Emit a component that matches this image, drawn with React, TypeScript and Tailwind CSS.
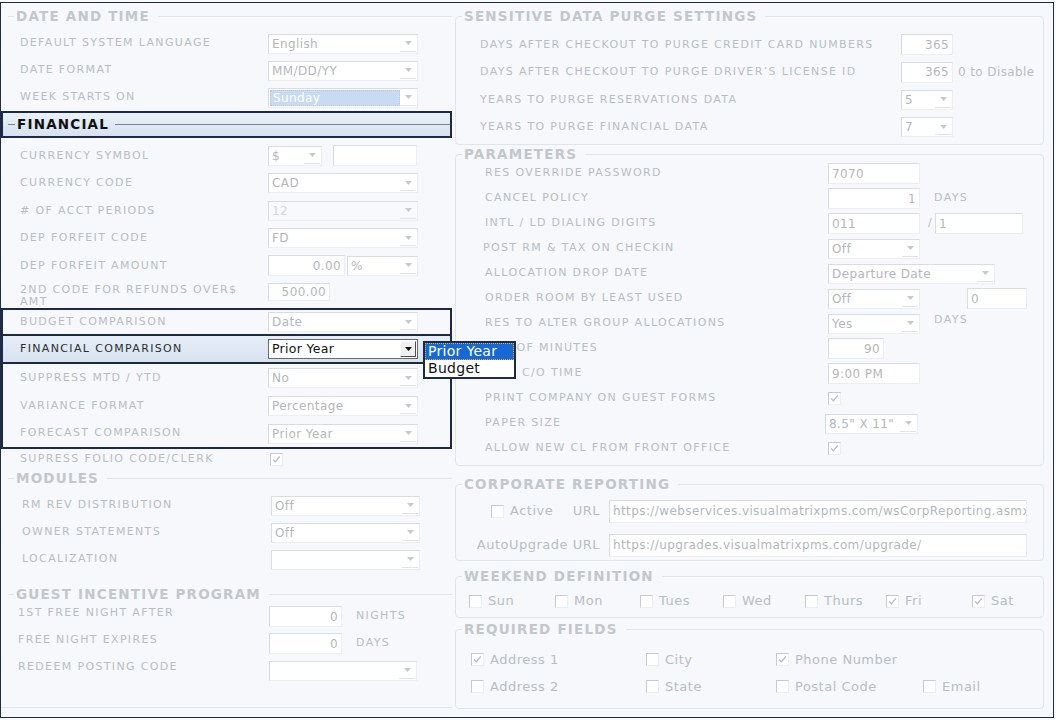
import type { ReactNode } from 'react'

const LABEL = 'whitespace-nowrap text-[11px] uppercase tracking-[1.35px] text-[#b9bdc3]'
const LEGEND = 'text-[13.5px] font-bold leading-[14px] tracking-[1.2px] text-[#c3c7cc]'
const VALUE = 'text-[12px] tracking-[0.4px]'
const SMALL = 'text-[13px] tracking-[0.5px] text-[#b9bdc3]'

function Arrow({ dark = false }: { dark?: boolean }) {
  return (
    <svg width="7" height="4" viewBox="0 0 7 4" aria-hidden>
      <path d="M0 0h7L3.5 4z" fill={dark ? '#111111' : '#c6cacf'} />
    </svg>
  )
}

type SelectProps = { value?: string; w: string; tone?: 'faded' | 'dim' | 'active' | 'focus' }

function Select({ value = '', w, tone = 'faded' }: SelectProps) {
  if (tone === 'active') {
    return (
      <div className={`flex h-[20px] shrink-0 items-center border border-[#6a6a6a] bg-white ${w}`}>
        <span className="flex-1 truncate pl-[3px] text-[12.5px] tracking-[0.3px] text-[#111]">{value}</span>
        <span className="mr-px flex h-[16px] w-[16px] items-center justify-center border border-t-white border-l-white border-r-[#4f4f4f] border-b-[#4f4f4f] bg-[#f0f0f0]">
          <Arrow dark />
        </span>
      </div>
    )
  }
  const dim = tone === 'dim'
  return (
    <div
      className={`flex h-[20px] shrink-0 items-center border border-t-[#d9dce0] border-l-[#d9dce0] border-r-[#eceef1] border-b-[#eceef1] ${
        dim ? 'bg-[#f8f9fb]' : 'bg-white'
      } ${w}`}
    >
      {tone === 'focus' ? (
        <span className="ml-px flex h-[16px] flex-1 items-center border border-dotted border-[#b7c7dc] bg-[#c8dbf2] pl-[2px] text-[12px] tracking-[0.4px] text-white">
          {value}
        </span>
      ) : (
        <span className={`flex-1 truncate pl-[3px] ${VALUE} ${dim ? 'text-[#d3d6da]' : 'text-[#b3b7bd]'}`}>{value}</span>
      )}
      <span className="mr-px flex h-[16px] w-[16px] items-center justify-center border-b border-[#e1e4e7]">
        <Arrow />
      </span>
    </div>
  )
}

function Field({ value = '', w, right = false, h = 'h-[21px]' }: { value?: string; w: string; right?: boolean; h?: string }) {
  return (
    <div
      className={`flex shrink-0 items-center overflow-hidden border border-t-[#d9dce0] border-l-[#d9dce0] border-r-[#eceef1] border-b-[#eceef1] bg-white px-[3px] ${VALUE} text-[#b3b7bd] ${
        right ? 'justify-end' : ''
      } ${w} ${h}`}
    >
      <span className="whitespace-nowrap">{value}</span>
    </div>
  )
}

function Check({ on = false }: { on?: boolean }) {
  return (
    <span className="flex h-[13px] w-[13px] shrink-0 items-center justify-center border border-t-[#c7cbd0] border-l-[#c7cbd0] border-r-[#eceef0] border-b-[#eceef0] bg-white">
      {on && (
        <svg width="9" height="9" viewBox="0 0 9 9" aria-hidden>
          <path d="M1.2 4.3 3.3 6.8 7.8 1.4" fill="none" stroke="#b5b9bf" strokeWidth="1.3" />
        </svg>
      )}
    </span>
  )
}

function Row({ label, lab, h = 'h-[27px]', children }: { label: ReactNode; lab: string; h?: string; children?: ReactNode }) {
  return (
    <div className={`flex items-center ${h}`}>
      <div className={`shrink-0 ${LABEL} ${lab}`}>{label}</div>
      {children}
    </div>
  )
}

function Section({ title, className, children }: { title: string; className: string; children: ReactNode }) {
  return (
    <fieldset className={`border-[#e1e5ea] ${className}`}>
      <legend className={`ml-[6px] pl-[2px] pr-[8px] ${LEGEND}`}>{title}</legend>
      {children}
    </fieldset>
  )
}

function LeftColumn() {
  const L1 = 'pl-[12px] w-[260px]'
  const LF = 'pl-[19px] w-[267px]'
  const LB = 'pl-[17px] w-[265px]'
  const LM = 'pl-[14px] w-[263px]'
  const LG = 'pl-[10px] w-[261px]'
  return (
    <div className="flex h-[704px] w-[451px] shrink-0 flex-col border-b border-[#e2e5e9]">
      <Section title="DATE AND TIME" className="ml-[7px] mt-[5px] border-t">
        <div className="pt-[7px]">
          <Row label="DEFAULT SYSTEM LANGUAGE" lab={L1}>
            <Select value="English" w="w-[150px]" />
          </Row>
          <Row label="DATE FORMAT" lab={L1}>
            <Select value="MM/DD/YY" w="w-[150px]" />
          </Row>
          <Row label="WEEK STARTS ON" lab={L1}>
            <Select value="Sunday" w="w-[150px]" tone="focus" />
          </Row>
        </div>
      </Section>

      <div className="flex h-[27px] items-center border-2 border-[#1c2a45] bg-linear-to-b from-[#eaf1f8] to-[#d6e2ee]">
        <span className="ml-[5px] h-px w-[7px] bg-[#7b838e]" />
        <span className="ml-[2px] text-[13.5px] font-bold tracking-[1.2px] text-[#111]">FINANCIAL</span>
        <span className="ml-[6px] h-px flex-1 bg-[#7b838e]" />
      </div>

      <div className="pt-[4px]">
        <Row label="CURRENCY SYMBOL" lab={LF} h="h-[27.5px]">
          <Select value="$" w="w-[54px]" />
          <div className="ml-[11px]">
            <Field w="w-[84px]" />
          </div>
        </Row>
        <Row label="CURRENCY CODE" lab={LF} h="h-[27.5px]">
          <Select value="CAD" w="w-[150px]" />
        </Row>
        <Row label="# OF ACCT PERIODS" lab={LF} h="h-[27.5px]">
          <Select value="12" w="w-[150px]" tone="dim" />
        </Row>
        <Row label="DEP FORFEIT CODE" lab={LF} h="h-[27.5px]">
          <Select value="FD" w="w-[150px]" />
        </Row>
        <Row label="DEP FORFEIT AMOUNT" lab={LF} h="h-[27.5px]">
          <Field value="0.00" w="w-[77px]" right />
          <div className="ml-[2px]">
            <Select value="%" w="w-[71px]" />
          </div>
        </Row>
        <div className="flex h-[28.5px] items-start">
          <div className={`shrink-0 pt-[4px] leading-[12px] ${LABEL} ${LF}`}>
            2ND CODE FOR REFUNDS OVER$
            <br />
            AMT
          </div>
          <div className="mt-[3.5px]">
            <Field value="500.00" w="w-[62px]" right h="h-[18px]" />
          </div>
        </div>
      </div>

      <div className="border-2 border-[#1c2a45]">
        <Row label="BUDGET COMPARISON" lab={LB} h="h-[24px]">
          <Select value="Date" w="w-[150px]" />
        </Row>
        <div className="-mx-[2px] flex h-[30px] items-center border-2 border-[#1c2a45] bg-linear-to-b from-[#e6eef7] to-[#d8e3ef]">
          <div className={`shrink-0 whitespace-nowrap text-[11px] tracking-[1.35px] text-[#2e2e2e] ${LB}`}>FINANCIAL COMPARISON</div>
          <div className="relative">
            <Select value="Prior Year" w="w-[150px]" tone="active" />
            <div className="absolute left-[155px] top-[2px] z-10 w-[93px] border-2 border-[#1c2a45] bg-white">
              <div className="h-[17px] border border-dotted border-[#e7a35a] bg-[#1669d4] pl-[2px] text-[14px] leading-[15px] tracking-[0.3px] text-white">
                Prior Year
              </div>
              <div className="h-[17px] pl-[3px] text-[14px] leading-[16px] tracking-[0.3px] text-[#111]">Budget</div>
            </div>
          </div>
        </div>
        <Row label="SUPPRESS MTD / YTD" lab={LB} h="h-[28px]">
          <Select value="No" w="w-[150px]" />
        </Row>
        <Row label="VARIANCE FORMAT" lab={LB} h="h-[28px]">
          <Select value="Percentage" w="w-[150px]" />
        </Row>
        <Row label="FORECAST COMPARISON" lab={LB} h="h-[27px]">
          <Select value="Prior Year" w="w-[150px]" />
        </Row>
      </div>

      <Row label="SUPRESS FOLIO CODE/CLERK" lab={LF} h="h-[20px]">
        <div className="ml-[2px]">
          <Check on />
        </div>
      </Row>

      <Section title="MODULES" className="ml-[7px] mt-[2px] border-t">
        <div className="pt-[7px]">
          <Row label="RM REV DISTRIBUTION" lab={LM}>
            <Select value="Off" w="w-[149px]" />
          </Row>
          <Row label="OWNER STATEMENTS" lab={LM}>
            <Select value="Off" w="w-[149px]" />
          </Row>
          <Row label="LOCALIZATION" lab={LM}>
            <Select w="w-[149px]" />
          </Row>
        </div>
      </Section>

      <Section title="GUEST INCENTIVE PROGRAM" className="ml-[7px] mt-[14px] border-t">
        <div className="pt-[2px]">
          <Row label={<span className="relative -top-[3px]">1ST FREE NIGHT AFTER</span>} lab={LG}>
            <Field value="0" w="w-[73px]" right />
            <span className={`ml-[14px] ${LABEL}`}>NIGHTS</span>
          </Row>
          <Row label={<span className="relative -top-[3px]">FREE NIGHT EXPIRES</span>} lab={LG}>
            <Field value="0" w="w-[73px]" right />
            <span className={`ml-[14px] ${LABEL}`}>DAYS</span>
          </Row>
          <Row label={<span className="relative -top-[3px]">REDEEM POSTING CODE</span>} lab={LG}>
            <Select w="w-[148px]" />
          </Row>
        </div>
      </Section>
    </div>
  )
}

function RightColumn() {
  const LS = 'pl-[24px] w-[445px]'
  const LP = 'pl-[29px] w-[372px]'
  const box = 'ml-[3px] w-[589px] rounded-[4px] border'
  return (
    <div className="flex w-[601px] flex-col">
      <Section title="SENSITIVE DATA PURGE SETTINGS" className={`${box} mt-[5px] pb-[3px]`}>
        <div className="pt-[8px]">
          <Row label="DAYS AFTER CHECKOUT TO PURGE CREDIT CARD NUMBERS" lab={LS} h="h-[27.5px]">
            <Field value="365" w="w-[52px]" right />
          </Row>
          <Row label="DAYS AFTER CHECKOUT TO PURGE DRIVER’S LICENSE ID" lab={LS} h="h-[27.5px]">
            <Field value="365" w="w-[52px]" right />
            <span className={`ml-[5px] ${VALUE} text-[#b9bdc3]`}>0 to Disable</span>
          </Row>
          <Row label="YEARS TO PURGE RESERVATIONS DATA" lab={LS} h="h-[27.5px]">
            <Select value="5" w="w-[52px]" />
          </Row>
          <Row label="YEARS TO PURGE FINANCIAL DATA" lab={LS} h="h-[27.5px]">
            <Select value="7" w="w-[52px]" />
          </Row>
        </div>
      </Section>

      <Section title="PARAMETERS" className={`${box} mt-[2px] pb-[4px]`}>
        <Row label="RES OVERRIDE PASSWORD" lab={LP} h="h-[25px]">
          <Field value="7070" w="w-[92px]" />
        </Row>
        <Row label="CANCEL POLICY" lab={LP} h="h-[25px]">
          <Field value="1" w="w-[92px]" right />
          <span className={`ml-[14px] ${LABEL}`}>DAYS</span>
        </Row>
        <Row label="INTL / LD DIALING DIGITS" lab={LP} h="h-[25px]">
          <Field value="011" w="w-[92px]" />
          <span className={`ml-[8px] ${LABEL}`}>/</span>
          <div className="ml-[2px]">
            <Field value="1" w="w-[88px]" />
          </div>
        </Row>
        <Row label="POST RM & TAX ON CHECKIN" lab="pl-[27px] w-[372px]" h="h-[25px]">
          <Select value="Off" w="w-[92px]" />
        </Row>
        <Row label="ALLOCATION DROP DATE" lab={LP} h="h-[25px]">
          <Select value="Departure Date" w="w-[167px]" />
        </Row>
        <Row label="ORDER ROOM BY LEAST USED" lab={LP} h="h-[25px]">
          <Select value="Off" w="w-[92px]" />
          <div className="ml-[47px]">
            <Field value="0" w="w-[60px]" />
          </div>
        </Row>
        <Row label="RES TO ALTER GROUP ALLOCATIONS" lab={LP} h="h-[25px]">
          <Select value="Yes" w="w-[92px]" />
          <span className={`relative -top-[3px] ml-[14px] ${LABEL}`}>DAYS</span>
        </Row>
        <Row label={<span className="pl-[16px]"># OF MINUTES</span>} lab={LP} h="h-[25px]">
          <Field value="90" w="w-[56px]" right />
        </Row>
        <Row label="LATE C/O TIME" lab={LP} h="h-[25px]">
          <Field value="9:00 PM" w="w-[92px]" />
        </Row>
        <Row label="PRINT COMPANY ON GUEST FORMS" lab={LP} h="h-[25px]">
          <Check on />
        </Row>
        <Row label="PAPER SIZE" lab="pl-[29px] w-[369px]" h="h-[25px]">
          <Select value={'8.5" X 11"'} w="w-[93px]" />
        </Row>
        <Row label="ALLOW NEW CL FROM FRONT OFFICE" lab={LP} h="h-[25px]">
          <Check on />
        </Row>
      </Section>

      <Section title="CORPORATE REPORTING" className={`${box} mt-[11px] pb-[3px]`}>
        <div className="pt-[8px]">
          <div className="flex h-[24px] items-center">
            <div className="flex w-[153px] shrink-0 items-center pl-[35px] pr-[9px]">
              <Check />
              <span className={`ml-[6px] ${SMALL}`}>Active</span>
              <span className={`ml-auto ${SMALL}`}>URL</span>
            </div>
            <Field value="https://webservices.visualmatrixpms.com/wsCorpReporting.asmx" w="w-[418px]" h="h-[23px]" />
          </div>
          <div className="mt-[10px] flex h-[24px] items-center">
            <div className="flex w-[153px] shrink-0 justify-end pr-[9px]">
              <span className={SMALL}>AutoUpgrade URL</span>
            </div>
            <Field value="https://upgrades.visualmatrixpms.com/upgrade/" w="w-[418px]" h="h-[23px]" />
          </div>
        </div>
      </Section>

      <Section title="WEEKEND DEFINITION" className={`${box} mt-[8px] pb-[5px]`}>
        <div className="box-content flex h-[22px] items-center pl-[13px] pt-[7px]">
          {[
            ['Sun', false, 'w-[86px]'],
            ['Mon', false, 'w-[85px]'],
            ['Tues', false, 'w-[83px]'],
            ['Wed', false, 'w-[82px]'],
            ['Thurs', false, 'w-[81px]'],
            ['Fri', true, 'w-[86px]'],
            ['Sat', true, 'w-[60px]'],
          ].map(([d, on, w]) => (
            <div key={d as string} className={`flex items-center gap-[6px] ${w}`}>
              <Check on={on as boolean} />
              <span className={SMALL}>{d as string}</span>
            </div>
          ))}
        </div>
      </Section>

      <Section title="REQUIRED FIELDS" className={`${box} mt-[4px] pb-[8px]`}>
        <div className="grid grid-cols-[175px_130px_147px_100px] pl-[15px] pt-[10px]">
          {[
            ['Address 1', true],
            ['City', false],
            ['Phone Number', true],
            ['', false],
            ['Address 2', false],
            ['State', false],
            ['Postal Code', false],
            ['Email', false],
          ].map(([t, on], i) =>
            t ? (
              <div key={i} className="flex h-[27px] items-center gap-[6px]">
                <Check on={on as boolean} />
                <span className={SMALL}>{t as string}</span>
              </div>
            ) : (
              <div key={i} className="h-[27px]" />
            ),
          )}
        </div>
      </Section>
    </div>
  )
}

export default function App() {
  return (
    <div className="h-[720px] w-[1056px] overflow-hidden bg-[#fbfcfe] pt-[2px] font-['DejaVu_Sans',sans-serif]">
      <div className="flex h-[716px] w-[1054px] border border-[#1d2c47] bg-[#f6f8fb] pt-px">
        <LeftColumn />
        <RightColumn />
      </div>
    </div>
  )
}
